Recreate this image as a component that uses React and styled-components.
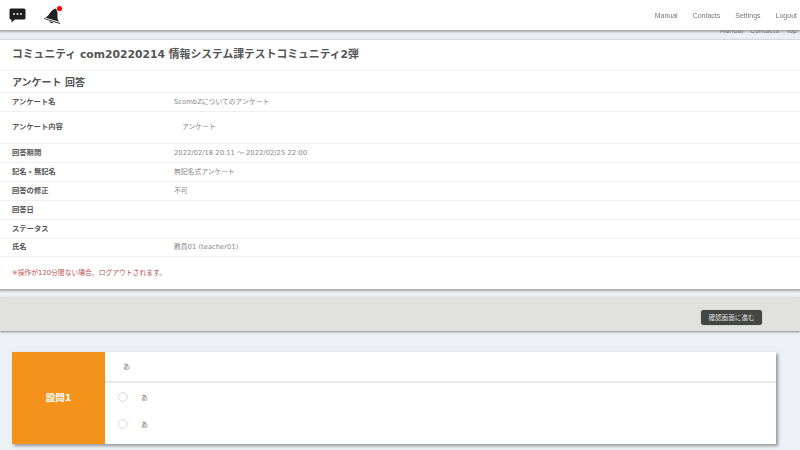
import React from "react";
import styled, { createGlobalStyle } from "styled-components";

const GlobalStyle = createGlobalStyle`
  html, body {
    margin: 0;
    padding: 0;
    height: 450px;
    overflow: hidden;
    background: #ecf1f6;
    font-family: "DejaVu Sans", "Noto Sans CJK JP", sans-serif;
    color: #555;
  }
  * { box-sizing: border-box; }
`;

const Header = styled.header`
  position: fixed;
  top: 0;
  left: 0;
  right: 0;
  z-index: 2;
  height: 30px;
  display: flex;
  align-items: center;
  justify-content: space-between;
  padding: 0 3px 0 9px;
  background: #fff;
  box-shadow: 0 1px 2px 1px rgba(120, 120, 120, 0.6);
`;

const IconGroup = styled.div`
  display: flex;
  align-items: center;
  gap: 18px;
`;

const NavList = styled.nav`
  display: flex;
  gap: 15px;
  font-family: "Liberation Sans", sans-serif;
  font-size: 7px;
  color: #777;
  margin-top: 1px;
`;

const Crumbs = styled.div`
  height: 40px;
  display: flex;
  justify-content: flex-end;
  gap: 7px;
  padding: 27px 3px 0 0;
  font-size: 6.5px;
  line-height: 8px;
  color: #777;
  overflow: hidden;
`;

const Panel = styled.section`
  background: #fff;
  box-shadow: 0 1px 2px 1px rgba(120, 120, 120, 0.6);
  height: 249px;
`;

const Title = styled.h1`
  margin: 0;
  height: 31px;
  padding: 0 12px 5px;
  display: flex;
  align-items: center;
  font-size: 10.8px;
  font-weight: 700;
  color: #555;
  border-bottom: 1px solid #f0f0f0;
`;

const Subtitle = styled.h2`
  margin: 0;
  height: 22px;
  padding: 0 12px 1px;
  display: flex;
  align-items: center;
  font-size: 10px;
  font-weight: 700;
  color: #555;
  border-bottom: 1px solid #eee;
`;

const Row = styled.div`
  display: flex;
  height: ${(p) => p.$height || 19}px;
  padding: ${(p) => (p.$tall ? "9px 12px 0" : "0 12px 3px")};
  align-items: ${(p) => (p.$tall ? "flex-start" : "center")};
  border-bottom: 1px solid #f0f0f0;
  font-size: 6.8px;
`;

const RowLabel = styled.div`
  width: 162px;
  flex: none;
  font-weight: 700;
  font-size: 7.3px;
  color: #555;
`;

const RowValue = styled.div`
  color: #888;
  padding-left: ${(p) => p.$indent || 0}px;
`;

const Notice = styled.p`
  margin: 0;
  padding: 10px 12px 0;
  font-size: 6.8px;
  color: #b5534f;
`;

const ActionBar = styled.div`
  margin-top: 8px;
  height: 34px;
  display: flex;
  align-items: center;
  justify-content: flex-end;
  padding: 7px 38px 0 0;
  background: #e1e1df;
  box-shadow: 0 1px 2px rgba(90, 90, 90, 0.7);
`;

const NextButton = styled.button`
  width: 61px;
  height: 15px;
  padding: 0 0 1px;
  border: none;
  border-radius: 3px;
  background: #444644;
  color: #ddd;
  font-family: inherit;
  font-size: 6.6px;
  box-shadow: 0 0 1px rgba(0, 0, 0, 0.5);
`;

const QuestionCard = styled.article`
  margin: 21px 24px 0 12px;
  height: 92px;
  display: flex;
  background: #fff;
  box-shadow: 2px 2px 3px rgba(90, 90, 90, 0.6);
`;

const QuestionLabel = styled.div`
  width: 93px;
  flex: none;
  display: flex;
  align-items: center;
  justify-content: center;
  padding-bottom: 2px;
  background: #f3931c;
  color: #fff;
  font-size: 9.5px;
  font-weight: 700;
`;

const QuestionBody = styled.div`
  flex: 1;
  display: flex;
  flex-direction: column;
`;

const QuestionText = styled.div`
  height: 31px;
  padding: 0 0 1px 18px;
  display: flex;
  align-items: center;
  border-bottom: 2px solid #e8e8e8;
  font-size: 6.8px;
  color: #777;
`;

const OptionList = styled.div`
  display: flex;
  flex-direction: column;
  gap: 17px;
  padding: 9px 0 0 13px;
`;

const Option = styled.label`
  display: flex;
  align-items: center;
  gap: 13px;
  font-size: 6.8px;
  color: #777;
`;

const Radio = styled.span`
  width: 10px;
  height: 10px;
  border: 1px solid #dcdcdc;
  border-radius: 50%;
  background: #fff;
`;

const ChatIcon = () => (
  <svg width="17" height="15" viewBox="0 0 17 15">
    <path d="M2 0.5h13a1.5 1.5 0 0 1 1.5 1.5v8a1.5 1.5 0 0 1-1.5 1.5H6L2.5 14.5V11.5H2A1.5 1.5 0 0 1 .5 10V2A1.5 1.5 0 0 1 2 .5z" fill="#1d1d1d" />
    <circle cx="5" cy="6" r="1.1" fill="#ddd" />
    <circle cx="8.5" cy="6" r="1.1" fill="#ddd" />
    <circle cx="12" cy="6" r="1.1" fill="#ddd" />
  </svg>
);

const BellIcon = () => (
  <svg width="20" height="20" viewBox="0 0 20 20">
    <g transform="rotate(17 9 11)">
      <path d="M9.5 3C7 4.5 5.5 7 5 10c-.4 2.2-1.5 3.700-3 4.800h14.500c-1.800-1.300-2.800-3-3.200-5C12.800 7 11.500 4.500 9.500 3z" fill="#222" />
      <rect x="0.5" y="15.5" width="17.5" height="1.1" fill="#444" />
      <path d="M7 17a2.3 1.7 0 0 0 4.500 0z" fill="#333" />
    </g>
    <circle cx="15.5" cy="3.5" r="2.6" fill="#f00" />
  </svg>
);

const rows = [
  { label: "アンケート名", value: "ScombZについてのアンケート" },
  { label: "アンケート内容", value: "アンケート", height: 32, indent: 8, tall: true },
  { label: "回答期間", value: "2022/02/18 20:11 ～ 2022/02/25 22:00" },
  { label: "記名・無記名", value: "無記名式アンケート" },
  { label: "回答の修正", value: "不可" },
  { label: "回答日" },
  { label: "ステータス" },
  { label: "氏名", value: "教員01 (teacher01)", height: 18 },
];

export default function App() {
  return (
    <>
      <GlobalStyle />
      <Header>
        <IconGroup>
          <ChatIcon />
          <BellIcon />
        </IconGroup>
        <NavList>
          <span>Manual</span>
          <span>Contacts</span>
          <span>Settings</span>
          <span>Logout</span>
        </NavList>
      </Header>
      <Crumbs>
        <span>Manual</span>
        <span>Contacts</span>
        <span>Top</span>
      </Crumbs>
      <Panel>
        <Title>コミュニティ com20220214 情報システム課テストコミュニティ2弾</Title>
        <Subtitle>アンケート 回答</Subtitle>
        {rows.map((row) => (
          <Row key={row.label} $height={row.height} $tall={row.tall}>
            <RowLabel>{row.label}</RowLabel>
            <RowValue $indent={row.indent}>{row.value}</RowValue>
          </Row>
        ))}
        <Notice>※操作が120分間ない場合、ログアウトされます。</Notice>
      </Panel>
      <ActionBar>
        <NextButton type="button">確認画面に進む</NextButton>
      </ActionBar>
      <QuestionCard>
        <QuestionLabel>設問1</QuestionLabel>
        <QuestionBody>
          <QuestionText>あ</QuestionText>
          <OptionList>
            <Option><Radio />あ</Option>
            <Option><Radio />あ</Option>
          </OptionList>
        </QuestionBody>
      </QuestionCard>
    </>
  );
}
